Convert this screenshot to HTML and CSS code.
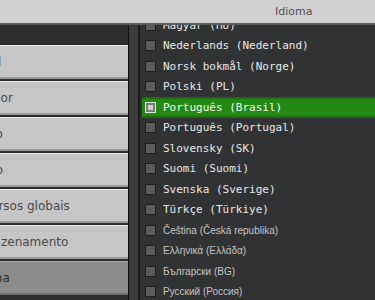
FILE: index.html
```html
<!DOCTYPE html>
<html lang="pt-BR">
<head>
    <meta charset="UTF-8">
    <meta name="viewport" content="width=device-width, initial-scale=1.0">
    <title>Idioma</title>
    <link rel="stylesheet" href="styles.css">
</head>
<body>
    <div id="screen">
        <div class="header">
            <span class="header-title">Idioma</span>
        </div>
        <div class="main">
            <div class="sidebar">
                <div class="side-button">Geral</div>
                <div class="side-button">Criador</div>
                <div class="side-button">Vídeo</div>
                <div class="side-button">Áudio</div>
                <div class="side-button">Recursos globais</div>
                <div class="side-button">Armazenamento</div>
                <div class="side-button selected">Idioma</div>
            </div>
            <div class="divider"></div>
            <div class="language-panel">
                <div class="language-list">
                    <div class="lang-row"><span class="checkbox"></span>Magyar (HU)</div>
                    <div class="lang-row"><span class="checkbox"></span>Nederlands (Nederland)</div>
                    <div class="lang-row"><span class="checkbox"></span>Norsk bokmål (Norge)</div>
                    <div class="lang-row"><span class="checkbox"></span>Polski (PL)</div>
                    <div class="lang-row active"><span class="checkbox"></span>Português (Brasil)</div>
                    <div class="lang-row"><span class="checkbox"></span>Português (Portugal)</div>
                    <div class="lang-row"><span class="checkbox"></span>Slovensky (SK)</div>
                    <div class="lang-row"><span class="checkbox"></span>Suomi (Suomi)</div>
                    <div class="lang-row"><span class="checkbox"></span>Svenska (Sverige)</div>
                    <div class="lang-row"><span class="checkbox"></span>Türkçe (Türkiye)</div>
                    <div class="lang-row small"><span class="checkbox"></span>Čeština (Česká republika)</div>
                    <div class="lang-row small"><span class="checkbox"></span>Ελληνικά (Ελλάδα)</div>
                    <div class="lang-row small"><span class="checkbox"></span>Български (BG)</div>
                    <div class="lang-row small"><span class="checkbox"></span>Русский (Россия)</div>
                </div>
            </div>
        </div>
    </div>
</body>
</html>
```

FILE: styles.css
```css
body {
    margin: 0;
    padding: 0;
    background-color: #313233;
    font-family: "DejaVu Sans Mono", monospace;
}
#screen {
    width: 375px;
    height: 300px;
    overflow: hidden;
    display: flex;
    flex-direction: column;
}
.header {
    height: 23px;
    flex-shrink: 0;
    background-color: #d0d0d1;
    border-bottom: 2px solid #5c5c5c;
    position: relative;
    z-index: 1;
    display: flex;
    align-items: center;
    padding-left: 275px;
}
.header-title {
    font-family: "DejaVu Sans", sans-serif;
    font-size: 11px;
    color: #505050;
}
.main {
    flex: 1;
    display: flex;
    min-height: 0;
}
.sidebar {
    width: 168px;
    margin-left: -40px;
    flex-shrink: 0;
    background-color: #2c2c2c;
    padding-top: 20px;
    display: flex;
    flex-direction: column;
    gap: 2px;
}
.side-button {
    height: 31px;
    background-color: #c6c6c6;
    border-top: 1px solid #ececec;
    border-bottom: 2px solid #9a9a9a;
    padding-left: 9px;
    display: flex;
    align-items: center;
    font-family: "DejaVu Sans", sans-serif;
    font-size: 12px;
    color: #4a4a4a;
}
.side-button.selected {
    background-color: #8c8c8c;
    border-top-color: #a8a8a8;
    border-bottom-color: #6e6e6e;
    color: #2e2e2e;
}
.divider {
    width: 9px;
    flex-shrink: 0;
    background-color: #3c3c3c;
    border-left: 1px solid #121212;
    border-right: 2px solid #1c1c1c;
}
.language-panel {
    flex: 1;
    overflow: hidden;
    padding-left: 2px;
}
.language-list {
    margin-top: -10px;
}
.lang-row {
    height: 20.5px;
    display: flex;
    align-items: center;
    gap: 7px;
    padding-left: 3px;
    font-size: 11px;
    color: #e8e8e8;
    white-space: nowrap;
}
.lang-row.active {
    background-color: #228a12;
    box-shadow: inset 0 2px 0 #1a6e0e, inset 0 -2px 0 #1a6e0e;
    color: #f2fff0;
}
.lang-row.small {
    font-family: "Liberation Sans", sans-serif;
    font-size: 10px;
    color: #c4c4c4;
}
.checkbox {
    width: 9px;
    height: 9px;
    flex-shrink: 0;
    background-color: #5b5b5b;
    border: 1px solid #1e1e1e;
}
.lang-row.active .checkbox {
    background-color: #cfcfcf;
    border-color: #e6e6e6;
    box-shadow: inset 0 0 0 2px #7a7a7a;
}
```
